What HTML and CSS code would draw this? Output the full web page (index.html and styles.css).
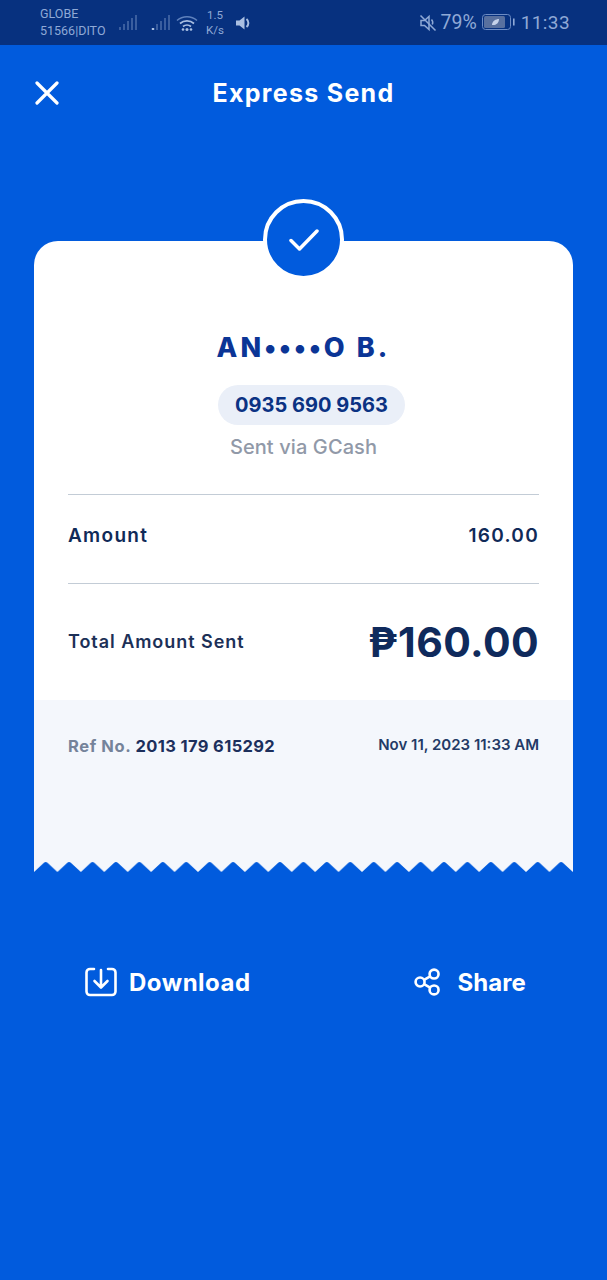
FILE: index.html
```html
<!DOCTYPE html>
<html lang="en">
  <head>
    <meta charset="UTF-8" />
    <meta name="viewport" content="width=device-width, initial-scale=1.0" />
    <title>Express Send</title>
    <link rel="stylesheet" href="styles.css">
  </head>
  <body>
    <div class="status-bar">
      <div class="carrier">
        <span>GLOBE</span>
        <span>51566|DITO</span>
      </div>
      <svg class="signal" viewBox="0 0 20 18">
        <path d="M2 13v3M6 10v6M10 7v9M14 4v12M18 1v15" stroke="#3a5e9f" stroke-width="2" fill="none"></path>
      </svg>
      <svg class="signal signal-second" viewBox="0 0 20 18">
        <path d="M2 14v2" stroke="#a9bfe2" stroke-width="2.4" fill="none"></path>
        <path d="M6 10v6M10 7v9M14 4v12M18 1v15" stroke="#3a5e9f" stroke-width="2" fill="none"></path>
      </svg>
      <svg class="wifi" viewBox="0 0 22 18">
        <path d="M1 6.5c5.500-5 14.500-5 20 0" stroke="#5f82bd" stroke-width="1.5" fill="none"></path>
        <path d="M4 9.500c4-3.500 10-3.500 14 0M7 12.500c2.300-2 5.700-2 8 0" stroke="#a9bfe2" stroke-width="1.700" fill="none"></path>
        <circle cx="7" cy="15.500" r="1.300" fill="#a9bfe2"></circle>
        <circle cx="11" cy="15.500" r="1.500" fill="#a9bfe2"></circle>
        <circle cx="15" cy="15.500" r="1.300" fill="#a9bfe2"></circle>
      </svg>
      <div class="speed">
        <span>1.5</span>
        <span>K/s</span>
      </div>
      <svg class="speaker" viewBox="0 0 18 18">
        <path d="M1 6.500h3.500L9.500 2.500v13l-5-4H1z" fill="#a9bfe2"></path>
        <path d="M11.500 5c2.500 2 2.500 6 0 8" stroke="#a9bfe2" stroke-width="2" fill="none"></path>
      </svg>
      <div class="status-right">
        <svg class="mute" viewBox="0 0 18 18">
          <path d="M2 6.500h3.500L10 2.500v13l-4.500-4H2z" fill="none" stroke="#8fa9d6" stroke-width="1.500"></path>
          <path d="M1.500 1.500l15 15M12.500 5.500c1.300 1.500 1.500 3.500.8 5" stroke="#8fa9d6" stroke-width="1.500" fill="none"></path>
        </svg>
        <span class="percent">79%</span>
        <svg class="battery" viewBox="0 0 33 17">
          <rect x="0.500" y="0.500" width="28" height="15" rx="3" fill="none" stroke="#6d8cc4"></rect>
          <rect x="2" y="2" width="21" height="12" rx="1.500" fill="#58709f"></rect>
          <path d="M10 11c0-4 4-6 7-6 0 4-3 6.500-7 6z" fill="#c5d2ea"></path>
          <rect x="31" y="4.500" width="1.600" height="7" fill="#8fa9d6"></rect>
        </svg>
        <span class="clock">11:33</span>
      </div>
    </div>

    <header class="header">
      <svg class="close-icon" viewBox="0 0 24 24">
        <path d="M2 2l20 20M22 2L2 22" stroke="#fff" stroke-width="3.200" stroke-linecap="round"></path>
      </svg>
      <h1 class="title">Express Send</h1>
    </header>

    <main class="receipt">
      <div class="check-badge">
        <svg class="check-icon" viewBox="0 0 30 24">
          <path d="M2 12.500l8.500 8.500L28 3" stroke="#fff" stroke-width="3.500" fill="none" stroke-linecap="round" stroke-linejoin="round"></path>
        </svg>
      </div>

      <section class="receipt-top">
        <div class="name">AN••••O B.</div>
        <div class="phone-pill">0935 690 9563</div>
        <div class="sent-via">Sent via GCash</div>
        <div class="row amount-row">
          <span>Amount</span>
          <span>160.00</span>
        </div>
        <div class="row total-row">
          <span class="total-label">Total Amount Sent</span>
          <span class="total-value">₱160.00</span>
        </div>
      </section>

      <section class="receipt-bottom">
        <div class="ref">
          <span class="ref-label">Ref No.</span>
          <span class="ref-number">2013 179 615292</span>
        </div>
        <div class="date">Nov 11, 2023 11:33 AM</div>
      </section>

      <svg class="teeth" viewBox="0 0 539 11" preserveAspectRatio="none">
        <defs>
          <pattern id="tooth" width="23.43" height="11" patternUnits="userSpaceOnUse">
            <rect width="23.43" height="11" fill="#f4f7fc"></rect>
            <path d="M0 11L9.700 2Q11.700 0 13.700 2L23.430 11z" fill="#015bdd"></path>
          </pattern>
        </defs>
        <rect width="539" height="11" fill="url(#tooth)"></rect>
      </svg>
    </main>

    <div class="actions">
      <div class="action action-download">
        <svg class="download-icon" viewBox="0 0 32 30">
          <path d="M9 2H5a3.500 3.500 0 0 0-3.500 3.500v19A3.500 3.500 0 0 0 5 28h22a3.500 3.500 0 0 0 3.500-3.500v-19A3.500 3.500 0 0 0 27 2h-4" stroke="#fff" stroke-width="2.600" fill="none" stroke-linecap="round"></path>
          <path d="M16 3v17M9.500 14l6.500 6.500 6.500-6.500" stroke="#fff" stroke-width="2.600" fill="none" stroke-linecap="round" stroke-linejoin="round"></path>
        </svg>
        <span>Download</span>
      </div>
      <div class="action action-share">
        <svg class="share-icon" viewBox="0 0 30 30">
          <g stroke="#fff" stroke-width="2.800" fill="none">
            <circle cx="6.500" cy="15" r="4.800"></circle>
            <circle cx="21.500" cy="6.500" r="4.800"></circle>
            <circle cx="21.500" cy="23.500" r="4.800"></circle>
            <path d="M10.800 12.700l6.500-3.700M10.800 17.300l6.500 3.700"></path>
          </g>
        </svg>
        <span>Share</span>
      </div>
    </div>
  </body>
</html>
```

FILE: styles.css
```css
body {
  margin: 0;
  min-height: 1280px;
  background-color: #015bdd;
  font-family: "Inter", "Open Sans", sans-serif;
  color: #0f2a5c;
}

.status-bar {
  height: 45px;
  background-color: #07317f;
  display: flex;
  align-items: center;
  padding: 0 37px 0 40px;
  box-sizing: border-box;
  color: #8fa9d6;
  font-family: "Roboto", sans-serif;
}

.carrier {
  display: flex;
  flex-direction: column;
  gap: 3px;
  width: 78px;
  font-size: 12.500px;
  line-height: 14px;
}

.signal {
  width: 20px;
  height: 18px;
}

.signal-second {
  margin-left: 13px;
}

.wifi {
  width: 22px;
  height: 18px;
  margin-left: 5px;
}

.speed {
  display: flex;
  flex-direction: column;
  align-items: center;
  width: 22px;
  margin-left: 6px;
  font-size: 11.500px;
  line-height: 15px;
}

.speaker {
  width: 18px;
  height: 18px;
  margin-left: 9px;
}

.status-right {
  display: flex;
  align-items: center;
  margin-left: auto;
}

.mute {
  width: 18px;
  height: 18px;
}

.percent {
  font-size: 19.500px;
  margin-left: 3px;
}

.battery {
  width: 33px;
  height: 17px;
  margin-left: 5px;
}

.clock {
  font-size: 19px;
  margin-left: 6px;
  letter-spacing: 0.4px;
}

.header {
  height: 96px;
  position: relative;
  display: flex;
  align-items: center;
  justify-content: center;
}

.close-icon {
  width: 24px;
  height: 24px;
  position: absolute;
  left: 35px;
  top: 36px;
}

.title {
  margin: 0;
  color: #fff;
  font-size: 25px;
  font-weight: 700;
  letter-spacing: 1.300px;
}

.receipt {
  position: relative;
  margin: 100px 34px 0;
  display: flex;
  flex-direction: column;
}

.check-badge {
  width: 73px;
  height: 73px;
  border: 4px solid #fff;
  border-radius: 50%;
  background-color: #015bdd;
  position: absolute;
  top: -42px;
  left: 229px;
  display: flex;
  align-items: center;
  justify-content: center;
}

.check-icon {
  width: 30px;
  height: 24px;
}

.receipt-top {
  height: 459px;
  box-sizing: border-box;
  background-color: #fff;
  border-radius: 24px 24px 0 0;
  padding: 88px 34px 0;
  display: flex;
  flex-direction: column;
  align-items: center;
}

.name {
  height: 38px;
  line-height: 38px;
  font-size: 27px;
  font-weight: 800;
  letter-spacing: 3.100px;
  color: #0b3596;
}

.phone-pill {
  margin: 18px 0 0 16px;
  height: 40px;
  line-height: 40px;
  padding: 0 17px;
  border-radius: 20px;
  background-color: #eaeff8;
  color: #0b3283;
  font-size: 20px;
  font-weight: 700;
}

.sent-via {
  margin-top: 9px;
  font-size: 20px;
  line-height: 26px;
  font-weight: 500;
  letter-spacing: 0.1px;
  color: #9199a8;
}

.row {
  align-self: stretch;
  display: flex;
  justify-content: space-between;
  align-items: center;
}

.amount-row {
  margin-top: 34px;
  padding-bottom: 6px;
  height: 82px;
  border-top: 1px solid #c3ccd6;
  border-bottom: 1px solid #c3ccd6;
  font-size: 19px;
  font-weight: 600;
  letter-spacing: 1.300px;
  color: #102a58;
}

.total-row {
  height: 117px;
}

.total-label {
  font-size: 18px;
  font-weight: 600;
  letter-spacing: 0.95px;
  color: #1c3057;
}

.total-value {
  font-size: 41px;
  font-weight: 750;
  letter-spacing: 0.4px;
  color: #0f2a5c;
}

.receipt-bottom {
  height: 161px;
  box-sizing: border-box;
  background-color: #f4f7fc;
  padding: 35px 34px 0;
  display: flex;
  justify-content: space-between;
  align-items: flex-start;
}

.ref {
  font-size: 16.500px;
  line-height: 22px;
  font-weight: 700;
  letter-spacing: 0.35px;
}

.ref-label {
  color: #75839a;
  letter-spacing: 0.6px;
}

.ref-number {
  color: #1c2f5c;
}

.date {
  font-size: 15px;
  line-height: 20px;
  font-weight: 600;
  color: #233a66;
}

.teeth {
  display: block;
  width: 539px;
  height: 11px;
}

.actions {
  display: flex;
  justify-content: space-between;
  align-items: center;
  margin-top: 94px;
  padding: 0 81px 0 85px;
  color: #fff;
  font-size: 24px;
  font-weight: 700;
  letter-spacing: 0.5px;
}

.action {
  display: flex;
  align-items: center;
  height: 32px;
}

.action-share {
  letter-spacing: 0.1px;
}

.download-icon {
  width: 32px;
  height: 30px;
  margin-right: 12px;
}

.share-icon {
  width: 28px;
  height: 28px;
  margin-right: 15px;
}
```
